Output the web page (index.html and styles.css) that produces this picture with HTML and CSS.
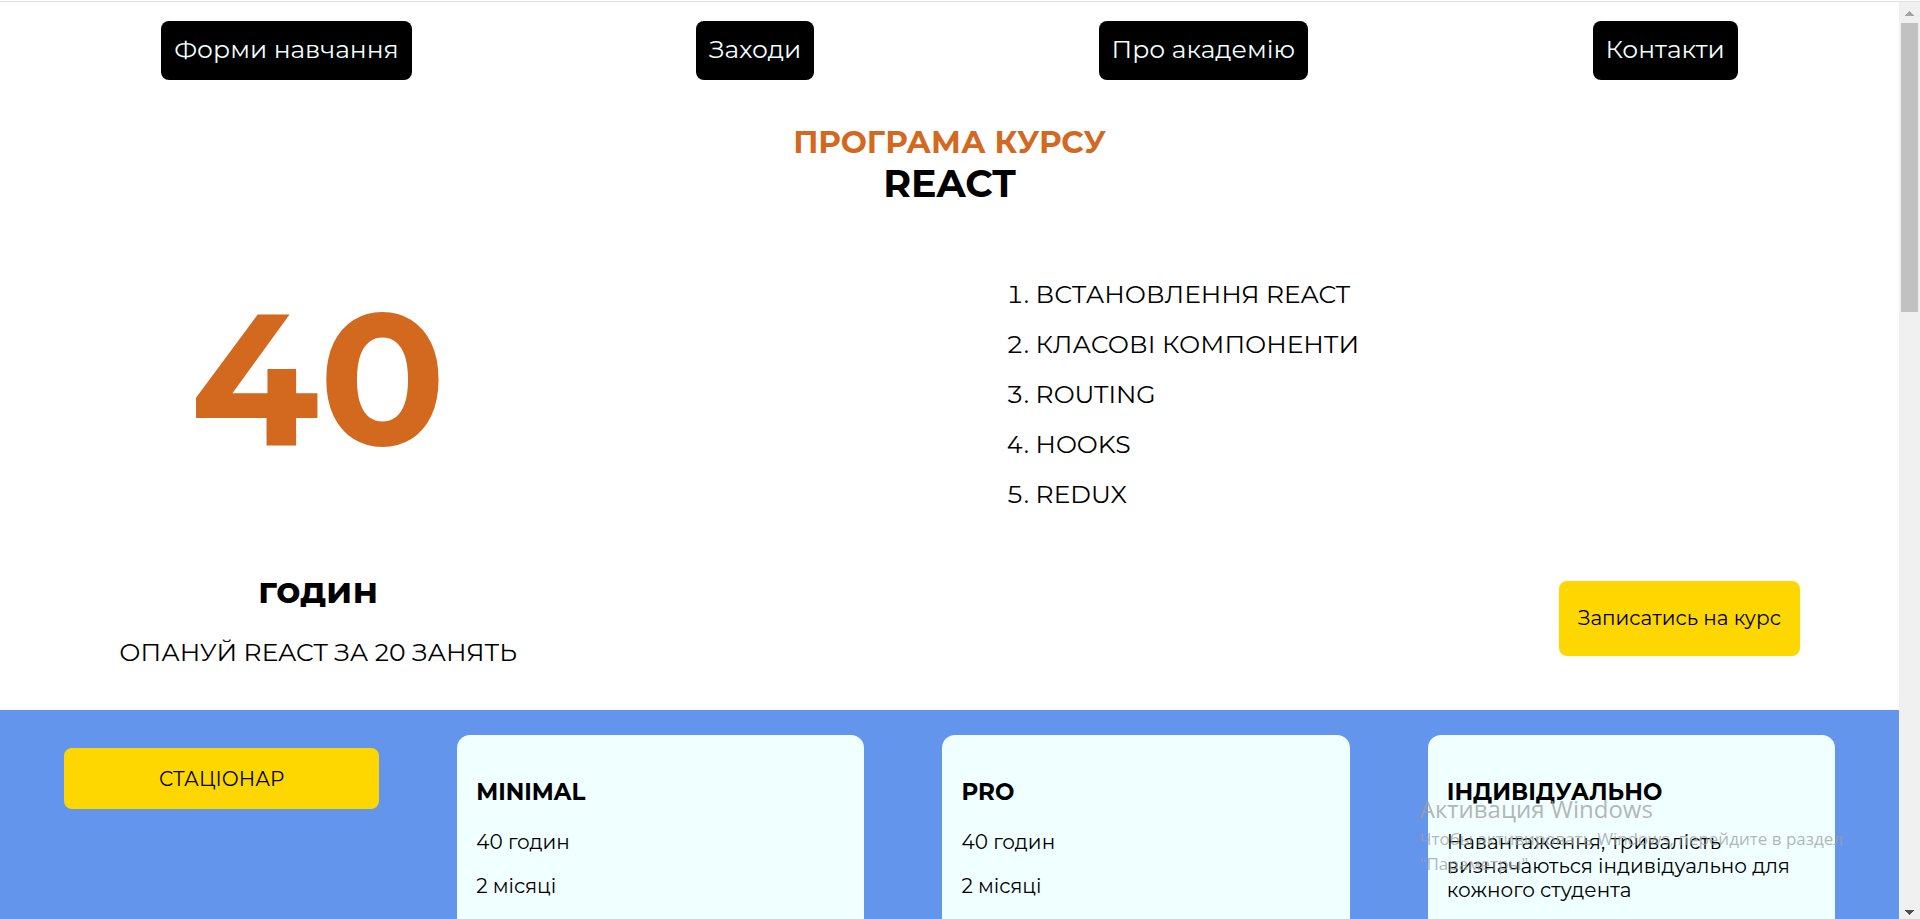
FILE: index.html
```html
<!DOCTYPE html>
<html lang="uk">
<head>
<meta charset="utf-8">
<title>Програма курсу React</title>
<link rel="stylesheet" href="styles.css">
</head>
<body>
<div class="window">
  <div class="page">
    <nav class="nav">
      <a class="nav-link" href="#forms">Форми навчання</a>
      <a class="nav-link" href="#events">Заходи</a>
      <a class="nav-link" href="#about">Про академію</a>
      <a class="nav-link" href="#contacts">Контакти</a>
    </nav>
    <header class="title">
      <h2 class="title-program">ПРОГРАМА КУРСУ</h2>
      <h1 class="title-course">REACT</h1>
    </header>
    <section class="program">
      <div class="duration">
        <p class="duration-number">40</p>
        <p class="duration-unit">годин</p>
        <p class="duration-note">ОПАНУЙ REACT ЗА 20 ЗАНЯТЬ</p>
      </div>
      <div class="topics">
        <ol class="topic-list">
          <li>ВСТАНОВЛЕННЯ REACT</li>
          <li>КЛАСОВІ КОМПОНЕНТИ</li>
          <li>ROUTING</li>
          <li>HOOKS</li>
          <li>REDUX</li>
        </ol>
        <button class="button enroll" type="button">Записатись на курс</button>
      </div>
    </section>
    <section class="plans">
      <button class="button mode" type="button">СТАЦІОНАР</button>
      <article class="card">
        <h3 class="card-title">MINIMAL</h3>
        <p class="card-text">40 годин</p>
        <p class="card-text">2 місяці</p>
      </article>
      <article class="card">
        <h3 class="card-title">PRO</h3>
        <p class="card-text">40 годин</p>
        <p class="card-text">2 місяці</p>
      </article>
      <article class="card">
        <h3 class="card-title">ІНДИВІДУАЛЬНО</h3>
        <p class="card-text">Навантаження, тривалість<br>визначаються індивідуально для<br>кожного студента</p>
      </article>
    </section>
  </div>
  <div class="scrollbar" aria-hidden="true">
    <svg class="arrow" viewBox="0 0 21 21"><path fill="#a3a3a3" d="M6 14h9v-1h-1v-1h-1v-1h-1v-1h-1V9h-1v1H9v1H8v1H7v1H6z"/></svg>
    <div class="track"><div class="thumb"></div></div>
    <svg class="arrow" viewBox="0 0 21 21"><path fill="#505050" d="M6 12h9v1h-1v1h-1v1h-1v1h-1v1h-1v-1H9v-1H8v-1H7v-1H6z"/></svg>
  </div>
</div>
<aside class="notice">
  <p class="notice-title">Активация Windows</p>
  <p class="notice-text">Чтобы активировать Windows, перейдите в раздел<br>"Параметры".</p>
</aside>
</body>
</html>
```
FILE: styles.css
```css
* {
  box-sizing: border-box;
}

body {
  margin: 0;
  height: 100vh;
  overflow: hidden;
  padding-top: 1px;
  color: #000;
  background: #fff;
  font-family: Montserrat, Inter, "Open Sans", sans-serif;
  font-weight: 400;
}

h1, h2, h3, p {
  margin: 0;
}

.window {
  display: flex;
  height: 100%;
  border-top: 1px solid #dfe1e1;
}

.page {
  flex: 1;
  display: flex;
  flex-direction: column;
  overflow: hidden;
}

.nav {
  display: flex;
  justify-content: space-around;
  padding: 19px 1% 0;
}

.nav-link {
  padding: 12px 13px 15px;
  border-radius: 8px;
  color: azure;
  background: #000;
  font-size: 25px;
  line-height: 32px;
  text-decoration: none;
}

.title {
  padding-top: 42px;
  text-align: center;
}

.title-program {
  color: chocolate;
  font-size: 31px;
  font-weight: 700;
  line-height: 40px;
}

.title-course {
  font-size: 38px;
  font-weight: 700;
  line-height: 44px;
}

.program {
  display: flex;
  padding-top: 58px;
}

.duration {
  width: 33.5%;
  padding-bottom: 38px;
  text-align: center;
}

.duration-number {
  color: chocolate;
  font-size: 187px;
  font-weight: 700;
  line-height: 228px;
}

.duration-unit {
  padding-top: 76px;
  font-size: 37px;
  font-weight: 700;
  line-height: 44px;
}

.duration-note {
  padding-top: 20px;
  font-size: 25px;
  line-height: 40px;
}

.topics {
  flex: 1;
  display: flex;
  flex-direction: column;
  padding: 5px 99px 54px 0;
}

.topic-list {
  margin: 0 0 0 21%;
  padding: 0 0 0 155px;
  font-size: 25px;
  line-height: 50px;
}

.button {
  border: 0;
  border-radius: 8px;
  color: #000;
  background: gold;
  font: inherit;
  font-size: 20px;
  line-height: 24px;
}

.enroll {
  align-self: flex-end;
  margin-top: auto;
  padding: 25px 19px 26px;
}

.plans {
  flex: 1;
  display: grid;
  grid-template-columns: 315fr 407fr 407fr 407fr;
  column-gap: 78px;
  padding: 25px 64px 0;
  background: cornflowerblue;
}

.mode {
  align-self: start;
  margin-top: 13px;
  padding: 19px 18px 18px;
}

.card {
  padding: 41px 19px 0;
  border-radius: 13px 13px 0 0;
  background: azure;
}

.card-title {
  padding-bottom: 2px;
  font-size: 23px;
  font-weight: 700;
  line-height: 32px;
}

.card-text {
  padding-top: 20px;
  font-size: 20px;
  line-height: 24px;
}

.scrollbar {
  width: 21px;
  display: flex;
  flex-direction: column;
  background: #f0f0f0;
}

.arrow {
  display: block;
  width: 21px;
  height: 21px;
}

.track {
  flex: 1;
  padding: 0 2px;
}

.thumb {
  height: 33%;
  background: #c1c1c1;
}

.notice {
  position: absolute;
  right: 77px;
  bottom: 43px;
  color: rgba(158, 158, 158, 0.75);
  font-family: "Segoe UI", "Open Sans", "Noto Sans", sans-serif;
  font-weight: 400;
  white-space: nowrap;
}

.notice-title {
  font-size: 24px;
  line-height: 34px;
}

.notice-text {
  font-size: 17px;
  line-height: 25px;
}
```
